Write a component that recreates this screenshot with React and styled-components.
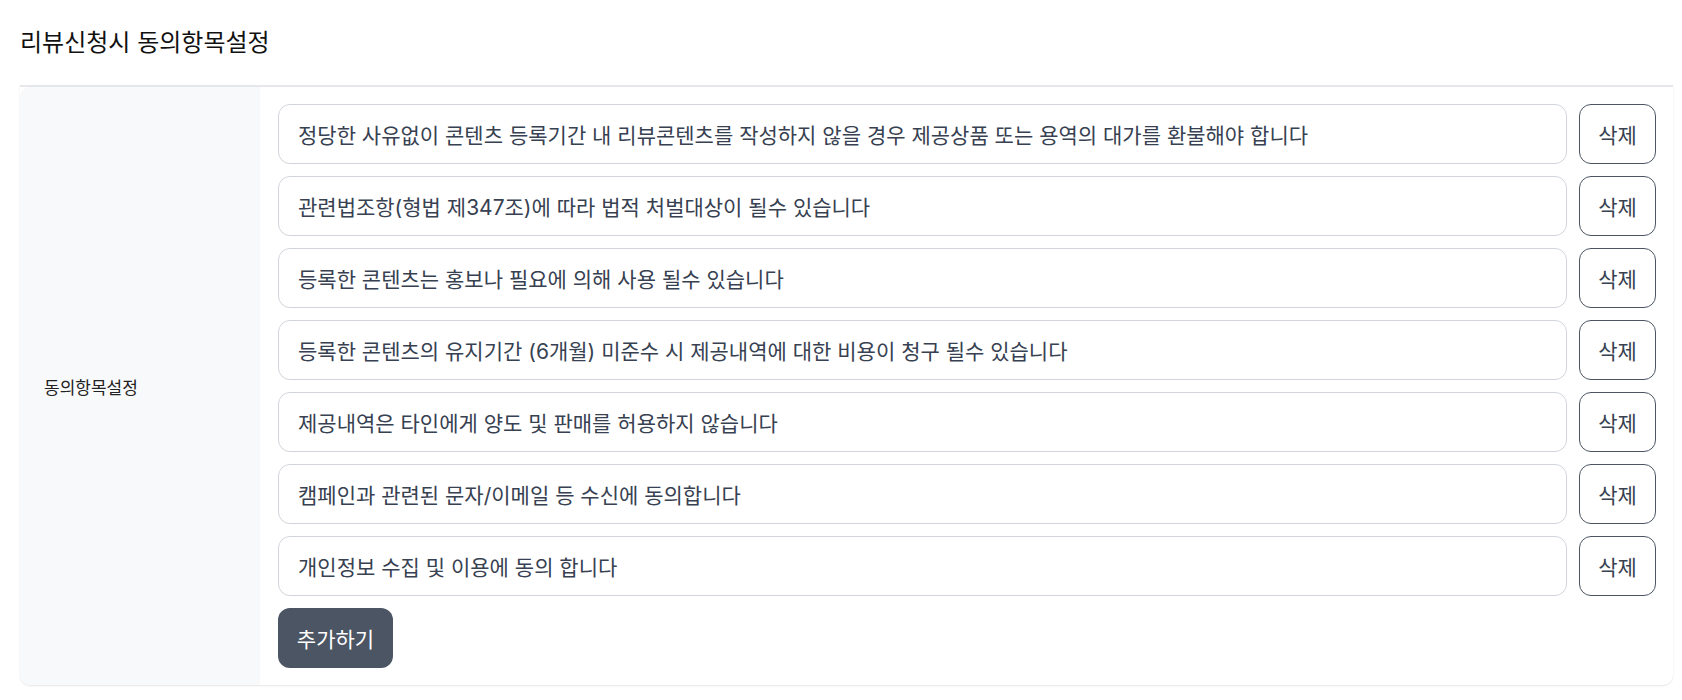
import React, { useState } from "react";
import styled, { createGlobalStyle } from "styled-components";

const Global = createGlobalStyle`
  html, body { margin: 0; padding: 0; background: #ffffff; }
  body { font-family: Inter, "Noto Sans CJK KR", sans-serif; color: #111827; }
  * { box-sizing: border-box; }
`;

const Page = styled.div`
  padding: 0 9px 14px 20px;
`;

const Title = styled.h2`
  margin: 0;
  height: 85px;
  display: flex;
  align-items: center;
  font-size: 24px;
  font-weight: 400;
  color: #111111;
  padding-bottom: 4px;
`;

const Card = styled.section`
  display: grid;
  grid-template-columns: 240px 1fr;
  border-top: 2px solid #e5e7eb;
  border-radius: 0 0 10px 10px;
  box-shadow: 0 1px 2px rgba(0, 0, 0, 0.1);
  background: #ffffff;
`;

const LabelCell = styled.div`
  background: #f8f9fb;
  display: flex;
  align-items: center;
  padding-left: 24px;
  font-size: 17px;
  color: #222222;
  border-radius: 10px 0 0 10px;
`;

const Body = styled.div`
  padding: 17px 17px 17px 18px;
  display: flex;
  flex-direction: column;
  gap: 12px;
`;

const Row = styled.div`
  display: flex;
  gap: 12px;
`;

const TextInput = styled.input`
  flex: 1;
  height: 60px;
  border: 1px solid #d1d5db;
  border-radius: 12px;
  padding: 0 19px;
  font-family: inherit;
  font-size: 21px;
  color: #374151;
  background: #ffffff;
  outline: none;
`;

const OutlineButton = styled.button`
  width: 77px;
  height: 60px;
  border: 1px solid #4b5563;
  border-radius: 12px;
  background: #ffffff;
  color: #374151;
  font-family: inherit;
  font-size: 21px;
  cursor: pointer;
`;

const SolidButton = styled.button`
  align-self: flex-start;
  width: 115px;
  height: 60px;
  border: none;
  border-radius: 12px;
  background: #4b5563;
  color: #ffffff;
  font-family: inherit;
  font-size: 21px;
  cursor: pointer;
`;

const initial = [
  "정당한 사유없이 콘텐츠 등록기간 내 리뷰콘텐츠를 작성하지 않을 경우 제공상품 또는 용역의 대가를 환불해야 합니다",
  "관련법조항(형법 제347조)에 따라 법적 처벌대상이 될수 있습니다",
  "등록한 콘텐츠는 홍보나 필요에 의해 사용 될수 있습니다",
  "등록한 콘텐츠의 유지기간 (6개월) 미준수 시 제공내역에 대한 비용이 청구 될수 있습니다",
  "제공내역은 타인에게 양도 및 판매를 허용하지 않습니다",
  "캠페인과 관련된 문자/이메일 등 수신에 동의합니다",
  "개인정보 수집 및 이용에 동의 합니다",
];

export default function App() {
  const [items, setItems] = useState(initial);
  return (
    <Page>
      <Global />
      <Title>리뷰신청시 동의항목설정</Title>
      <Card>
        <LabelCell>동의항목설정</LabelCell>
        <Body>
          {items.map((t, i) => (
            <Row key={i}>
              <TextInput
                value={t}
                onChange={(e) =>
                  setItems(items.map((v, j) => (j === i ? e.target.value : v)))
                }
              />
              <OutlineButton onClick={() => setItems(items.filter((_, j) => j !== i))}>
                삭제
              </OutlineButton>
            </Row>
          ))}
          <SolidButton onClick={() => setItems([...items, ""])}>추가하기</SolidButton>
        </Body>
      </Card>
    </Page>
  );
}
